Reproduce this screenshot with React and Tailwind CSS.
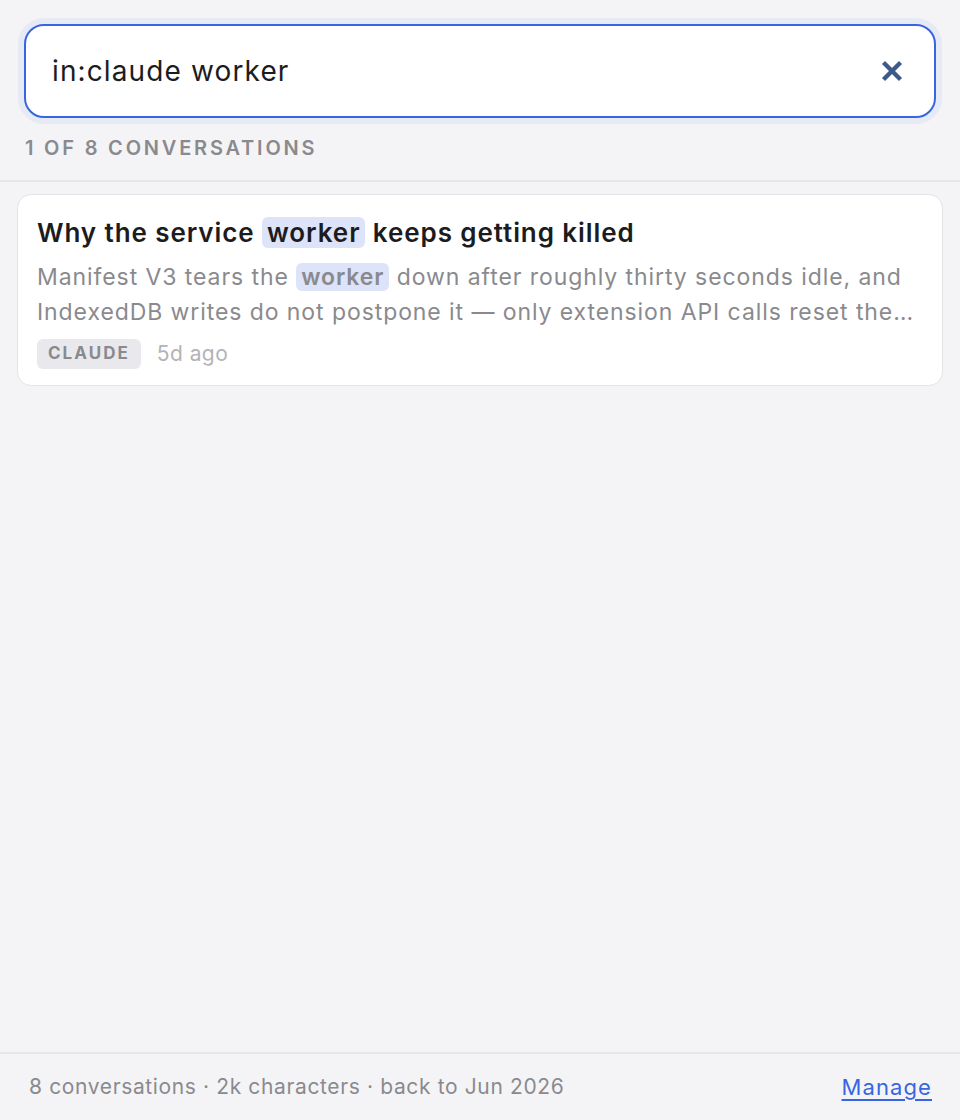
import React from 'react'

const FONT = { fontFamily: 'Inter, "Noto Sans", "Liberation Sans", sans-serif' }

// query highlight
function Mark({ children, className = '' }) {
  return (
    <mark className={`bg-[#dde3f8] rounded-[6px] px-[5px] ${className}`}>
      {children}
    </mark>
  )
}

function ResultCard() {
  return (
    <div className="bg-white border border-[#e3e3e8] rounded-[14px] pl-[19px] pr-[19px] pt-[21px] pb-[15px]">
      <h3 className="text-[26px] leading-[34px] font-semibold tracking-[0.035em] text-[#1c1c1e] truncate">
        Why the service <Mark className="text-[#1c1c1e]">worker</Mark> keeps getting killed
      </h3>
      <p className="mt-[10px] text-[23px] leading-[35px] tracking-[0.04em] text-[#8a8a8e] line-clamp-2">
        Manifest V3 tears the <Mark className="font-semibold text-[#8a8a8e]">worker</Mark> down after roughly thirty seconds idle, and IndexedDB writes do not postpone it — only extension API calls reset the idle timer, so keep a port open while work is pending.
      </p>
      <div className="mt-[8px] flex items-center gap-[16px]">
        <span className="bg-[#e9e9ed] rounded-[6px] px-[11px] h-[30px] flex items-center text-[17px] font-bold tracking-[0.12em] text-[#8a8a8e]">
          CLAUDE
        </span>
        <span className="text-[21px] tracking-[0.02em] text-[#b3b3b8]">5d ago</span>
      </div>
    </div>
  )
}

export default function App() {
  return (
    <div style={FONT} className="h-[1120px] w-full bg-[#f4f4f7] flex flex-col">
      {/* Search */}
      <div className="px-[24px] pt-[24px]">
        <div className="flex items-center h-[94px] bg-white border-2 border-[#3866e0] rounded-[20px] ring-[6px] ring-[#e6eaf4] pl-[26px] pr-[30px]">
          <input
            readOnly
            value="in:claude worker"
            style={FONT}
            className="flex-1 bg-transparent outline-none text-[28px] tracking-[0.04em] text-[#1c1c1e]"
          />
          <button className="text-[#3d5a8c]" aria-label="Clear">
            <svg width="24" height="24" viewBox="0 0 24 24" fill="none">
              <path d="M3.5 3.5 20.5 20.5M20.5 3.5 3.5 20.5" stroke="currentColor" strokeWidth="4.4" strokeLinecap="butt" />
            </svg>
          </button>
        </div>
        <div className="mt-[18px] pb-[20px] pl-[1px] text-[20px] leading-[24px] font-semibold tracking-[0.14em] text-[#8a8a8e]">
          1 OF 8 CONVERSATIONS
        </div>
      </div>

      {/* Results */}
      <div className="flex-1 border-t-2 border-[#e6e6ea] px-[17px] pt-[12px]">
        <ResultCard />
      </div>

      {/* Footer */}
      <div className="h-[68px] border-t-2 border-[#e6e6ea] flex items-center justify-between pl-[29px] pr-[28px]">
        <span className="text-[21px] tracking-[0.03em] text-[#8a8a8e]">
          8 conversations · 2k characters · back to Jun 2026
        </span>
        <a href="#" className="text-[22px] tracking-[0.05em] text-[#3866e0] underline underline-offset-[4px]">
          Manage
        </a>
      </div>
    </div>
  )
}
